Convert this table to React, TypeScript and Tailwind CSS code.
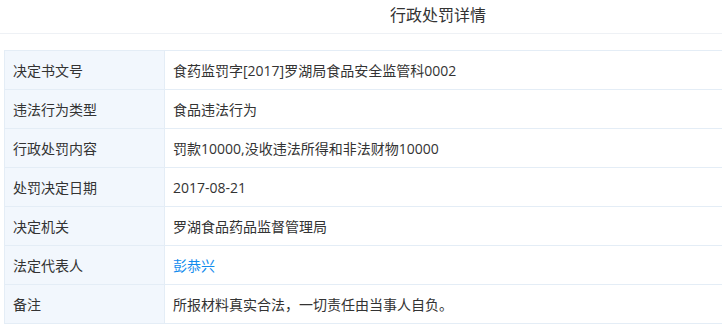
import React from 'react';

const rows: { label: string; value: string; link?: boolean }[] = [
  { label: '决定书文号', value: '食药监罚字[2017]罗湖局食品安全监管科0002' },
  { label: '违法行为类型', value: '食品违法行为' },
  { label: '行政处罚内容', value: '罚款10000,没收违法所得和非法财物10000' },
  { label: '处罚决定日期', value: '2017-08-21' },
  { label: '决定机关', value: '罗湖食品药品监督管理局' },
  { label: '法定代表人', value: '彭恭兴', link: true },
  { label: '备注', value: '所报材料真实合法，一切责任由当事人自负。' },
];

export default function App(): React.ReactElement {
  return (
    <div className="w-[722px] h-[329px] overflow-hidden bg-white">
      <div
        className="w-[876px] text-[#333]"
        style={{ fontFamily: '"Open Sans", "Noto Sans CJK SC", sans-serif' }}
      >
        {/* Title */}
        <div className="h-[34px] border-b border-[#eef1f5] text-center text-[16px] leading-[30px]">
          行政处罚详情
        </div>

        {/* Detail table */}
        <table className="mt-4 ml-1 w-[868px] border-collapse text-[14px]">
          <tbody>
            {rows.map((r) => (
              <tr key={r.label} className="h-[39px]">
                <td className="w-[160px] border border-[#e4edf6] bg-[#f2f7fd] px-2 align-middle">
                  {r.label}
                </td>
                <td className="border border-[#e4edf6] px-2 align-middle">
                  {r.link ? <span className="text-[#128bed]">{r.value}</span> : r.value}
                </td>
              </tr>
            ))}
          </tbody>
        </table>
      </div>
    </div>
  );
}
